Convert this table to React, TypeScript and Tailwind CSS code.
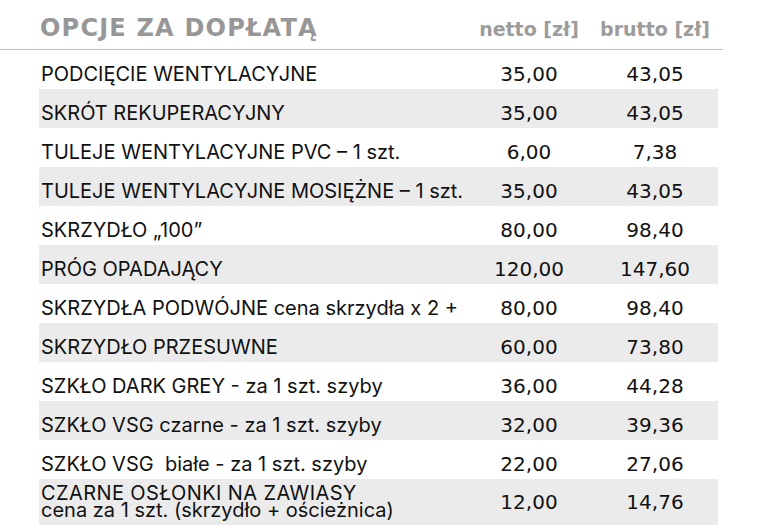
import React from 'react';

type Row = { label: React.ReactNode; netto: string; brutto: string; tall?: boolean };

const rows: Row[] = [
    { label: 'PODCIĘCIE WENTYLACYJNE', netto: '35,00', brutto: '43,05' },
    { label: 'SKRÓT REKUPERACYJNY', netto: '35,00', brutto: '43,05' },
    { label: 'TULEJE WENTYLACYJNE PVC – 1 szt.', netto: '6,00', brutto: '7,38' },
    { label: 'TULEJE WENTYLACYJNE MOSIĘŻNE – 1 szt.', netto: '35,00', brutto: '43,05' },
    { label: 'SKRZYDŁO „100”', netto: '80,00', brutto: '98,40' },
    { label: 'PRÓG OPADAJĄCY', netto: '120,00', brutto: '147,60' },
    { label: 'SKRZYDŁA PODWÓJNE cena skrzydła x 2 +', netto: '80,00', brutto: '98,40' },
    { label: 'SKRZYDŁO PRZESUWNE', netto: '60,00', brutto: '73,80' },
    { label: 'SZKŁO DARK GREY - za 1 szt. szyby', netto: '36,00', brutto: '44,28' },
    { label: 'SZKŁO VSG czarne - za 1 szt. szyby', netto: '32,00', brutto: '39,36' },
    { label: 'SZKŁO VSG\u00a0 białe - za 1 szt. szyby', netto: '22,00', brutto: '27,06' },
    {
        label: (
            <>
                <span className="tracking-[0.4px]">CZARNE OSŁONKI NA ZAWIASY</span>
                <br />
                cena za 1 szt. (skrzydło + ościeżnica)
            </>
        ),
        netto: '12,00',
        brutto: '14,76',
        tall: true,
    },
];

const wide = { fontFamily: '"DejaVu Sans", Verdana, sans-serif' };

export default function App() {
    return (
        <div className="w-[762px] h-[531px] bg-white overflow-hidden text-[#111]" style={{ fontFamily: 'Inter, "Noto Sans", sans-serif' }}>
            <div className="flex items-baseline h-[50px] border-b border-[#bdbdbd] w-[723px] pt-[16px]" style={wide}>
                <div className="pl-[40px] flex-1 text-[24px] font-bold tracking-[1.2px] text-[#979797] leading-none">OPCJE ZA DOPŁATĄ</div>
                <div className="w-[126px] text-center text-[19px] font-bold text-[#9c9c9c] leading-none">netto [zł]</div>
                <div className="w-[126px] text-center text-[19px] font-bold text-[#9c9c9c] leading-none">brutto [zł]</div>
                <div className="w-[5px]" />
            </div>
            <div className="ml-[39px] w-[679px]">
                {rows.map((r, i) => (
                    <div
                        key={i}
                        className={`flex items-center ${r.tall ? 'h-[46px]' : 'h-[39px] pt-[8px]'} ${i % 2 === 1 ? 'bg-[#ebebeb]' : ''}`}
                    >
                        <div className={`flex-1 pl-[2px] text-[20px] ${r.tall ? 'leading-[17px]' : 'leading-[20px]'}`}>{r.label}</div>
                        <div className="w-[126px] text-center text-[20px]" style={wide}>{r.netto}</div>
                        <div className="w-[126px] text-center text-[20px]" style={wide}>{r.brutto}</div>
                    </div>
                ))}
            </div>
        </div>
    );
}
